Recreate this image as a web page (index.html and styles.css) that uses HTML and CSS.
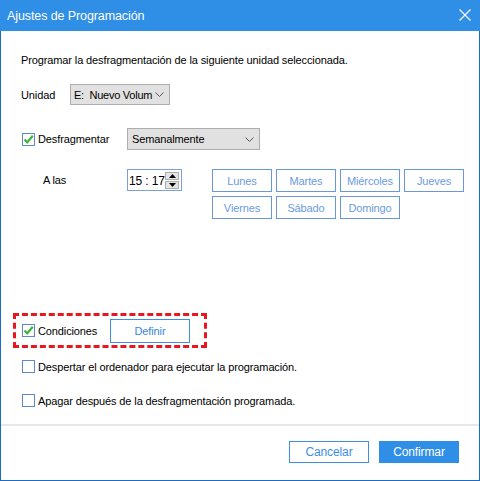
FILE: index.html
```html
<!DOCTYPE html>
<html>
<head>
<meta charset="utf-8">
<link rel="stylesheet" href="styles.css">
</head>
<body>
<div class="window">
  <div class="titlebar">
    <span class="title">Ajustes de Programación</span>
    <svg class="close" width="12" height="12" viewBox="0 0 12 12"><path d="M0.5 0.5L11.5 11.5M11.5 0.5L0.5 11.5" stroke="#fff" stroke-width="1.2" fill="none"/></svg>
  </div>
  <div class="content">
    <p class="desc">Programar la desfragmentación de la siguiente unidad seleccionada.</p>

    <div class="row unit-row">
      <span class="unit-label">Unidad</span>
      <div class="select select-unit">
        <span class="select-text">E:&nbsp; Nuevo Volum</span>
        <svg class="chev" width="9" height="5" viewBox="0 0 9 5"><path d="M0.5 0.5L4.5 4.5L8.5 0.5" stroke="#555" fill="none"/></svg>
      </div>
    </div>

    <div class="row defrag-row">
      <label class="check defrag-check">
        <span class="box checked"><svg width="13" height="13" viewBox="0 0 13 13"><path d="M2.5 6.5L5.2 9.3L10.8 2.8" stroke="#3fb53c" stroke-width="2.2" fill="none"/></svg></span>
        <span>Desfragmentar</span>
      </label>
      <div class="select select-freq">
        <span class="select-text">Semanalmente</span>
        <svg class="chev" width="9" height="5" viewBox="0 0 9 5"><path d="M0.5 0.5L4.5 4.5L8.5 0.5" stroke="#555" fill="none"/></svg>
      </div>
    </div>

    <div class="row time-row">
      <span class="time-label">A las</span>
      <div class="time">
        <span class="time-text">15 : 17</span>
        <div class="spin">
          <span class="spin-btn"><svg width="7" height="4" viewBox="0 0 7 4"><path d="M3.5 0L7 4H0Z" fill="#000"/></svg></span>
          <span class="spin-btn"><svg width="7" height="4" viewBox="0 0 7 4"><path d="M0 0H7L3.5 4Z" fill="#000"/></svg></span>
        </div>
      </div>
      <div class="days">
        <span class="day">Lunes</span>
        <span class="day">Martes</span>
        <span class="day">Miércoles</span>
        <span class="day">Jueves</span>
        <span class="day">Viernes</span>
        <span class="day">Sábado</span>
        <span class="day">Domingo</span>
      </div>
    </div>

    <div class="cond-box">
      <label class="check">
        <span class="box checked"><svg width="13" height="13" viewBox="0 0 13 13"><path d="M2.5 6.5L5.2 9.3L10.8 2.8" stroke="#3fb53c" stroke-width="2.2" fill="none"/></svg></span>
        <span>Condiciones</span>
      </label>
      <span class="btn-define">Definir</span>
    </div>

    <label class="check opt opt-wake">
      <span class="box"></span>
      <span>Despertar el ordenador para ejecutar la programación.</span>
    </label>
    <label class="check opt opt-off">
      <span class="box"></span>
      <span>Apagar después de la desfragmentación programada.</span>
    </label>
  </div>
  <div class="footer">
    <span class="btn btn-cancel">Cancelar</span>
    <span class="btn btn-ok">Confirmar</span>
  </div>
</div>
</body>
</html>
```

FILE: styles.css
```css
html, body {
  margin: 0;
  padding: 0;
  background: #fff;
}
body {
  width: 480px;
  height: 481px;
  overflow: hidden;
  font-family: "Liberation Sans", Arial, sans-serif;
  font-size: 11px;
  letter-spacing: -0.12px;
  color: #000;
}
.window {
  box-sizing: border-box;
  width: 480px;
  height: 481px;
  border: 1px solid #1a6cc4;
  border-top: none;
  display: flex;
  flex-direction: column;
  background: #fff;
}
.titlebar {
  height: 31px;
  flex: none;
  background: #2f8ee6;
  display: flex;
  align-items: center;
  justify-content: space-between;
  padding: 0 9px 0 7px;
  margin: 0 -1px;
}
.title {
  color: #fff;
  font-size: 12.5px;
  letter-spacing: -0.1px;
  padding-top: 1px;
}
.close {
  display: block;
  margin-top: -1px;
}
.content {
  flex: 1;
  padding: 0 0 0 20px;
  display: flex;
  flex-direction: column;
}
.desc {
  margin: 22px 0 0 0;
  line-height: 14px;
}
.row {
  display: flex;
  align-items: center;
}
.unit-row {
  margin-top: 17px;
}
.unit-label {
  width: 49px;
  flex: none;
}
.select {
  box-sizing: border-box;
  background: #e1e1e1;
  border: 1px solid #adadad;
  display: flex;
  align-items: center;
  justify-content: space-between;
  padding: 0 5px 0 4px;
  flex: none;
}
.select-text {
  white-space: nowrap;
}
.select-unit {
  width: 100px;
  height: 21px;
  padding-left: 3px;
}
.select-unit .select-text {
  letter-spacing: -0.25px;
}
.select-freq {
  width: 133px;
  height: 22px;
}
.defrag-row {
  margin-top: 23px;
}
.check {
  display: flex;
  align-items: center;
  gap: 3px;
}
.box {
  box-sizing: border-box;
  width: 13px;
  height: 13px;
  border: 1px solid #5b88cf;
  background: #fff;
  position: relative;
  margin-left: 1px;
  flex: none;
}
.box svg {
  position: absolute;
  left: -1px;
  top: -1px;
}
.defrag-check {
  width: 106px;
  flex: none;
}
.time-row {
  margin-top: 19px;
  align-items: flex-start;
}
.time-label {
  width: 106px;
  padding-left: 22px;
  box-sizing: border-box;
  margin-top: 5px;
  flex: none;
}
.time {
  box-sizing: border-box;
  width: 55px;
  height: 22px;
  border: 1px solid #7aa1dc;
  display: flex;
  align-items: center;
  justify-content: space-between;
  padding: 0 2px 0 1px;
  font-size: 12px;
  flex: none;
}
.time-text {
  padding-top: 1px;
  white-space: nowrap;
}
.spin {
  display: flex;
  flex-direction: column;
  gap: 1px;
}
.spin-btn {
  box-sizing: border-box;
  width: 14px;
  height: 8px;
  background: #e5e5e5;
  border: 1px solid #adadad;
  display: flex;
  align-items: center;
  justify-content: center;
}
.spin-btn svg {
  display: block;
}
.days {
  margin-left: 30px;
  display: grid;
  grid-template-columns: repeat(4, 60px);
  grid-auto-rows: 23px;
  gap: 4px 4px;
  flex: none;
}
.day {
  box-sizing: border-box;
  border: 1px solid #6a97da;
  color: #6a9be2;
  display: flex;
  align-items: center;
  justify-content: center;
  font-size: 11px;
}
.cond-box {
  box-sizing: border-box;
  margin-top: 94px;
  margin-left: -8px;
  width: 194px;
  height: 35px;
  border: 3px dashed #e8161d;
  display: flex;
  align-items: center;
  padding: 0 0 0 5px;
}
.cond-box .check {
  width: 89px;
  flex: none;
}
.btn-define {
  box-sizing: border-box;
  width: 80px;
  height: 24px;
  border: 1px solid #3d8ee6;
  color: #3a86dc;
  display: flex;
  align-items: center;
  justify-content: center;
  font-size: 11px;
}
.opt-wake {
  margin-top: 12px;
}
.opt-off {
  margin-top: 21px;
}
.footer {
  flex: none;
  height: 56px;
  margin: 0;
  border-top: 2px solid #e8e8e8;
  display: flex;
  justify-content: flex-end;
  align-items: flex-start;
  padding: 15px 20px 0 0;
  gap: 10px;
  box-sizing: border-box;
}
.btn {
  box-sizing: border-box;
  width: 80px;
  height: 22px;
  display: flex;
  align-items: center;
  justify-content: center;
  font-size: 12px;
}
.btn-cancel {
  border: 1px solid #3d8ee6;
  color: #3d8ee6;
}
.btn-ok {
  background: #2f8ee6;
  color: #fff;
}
```
